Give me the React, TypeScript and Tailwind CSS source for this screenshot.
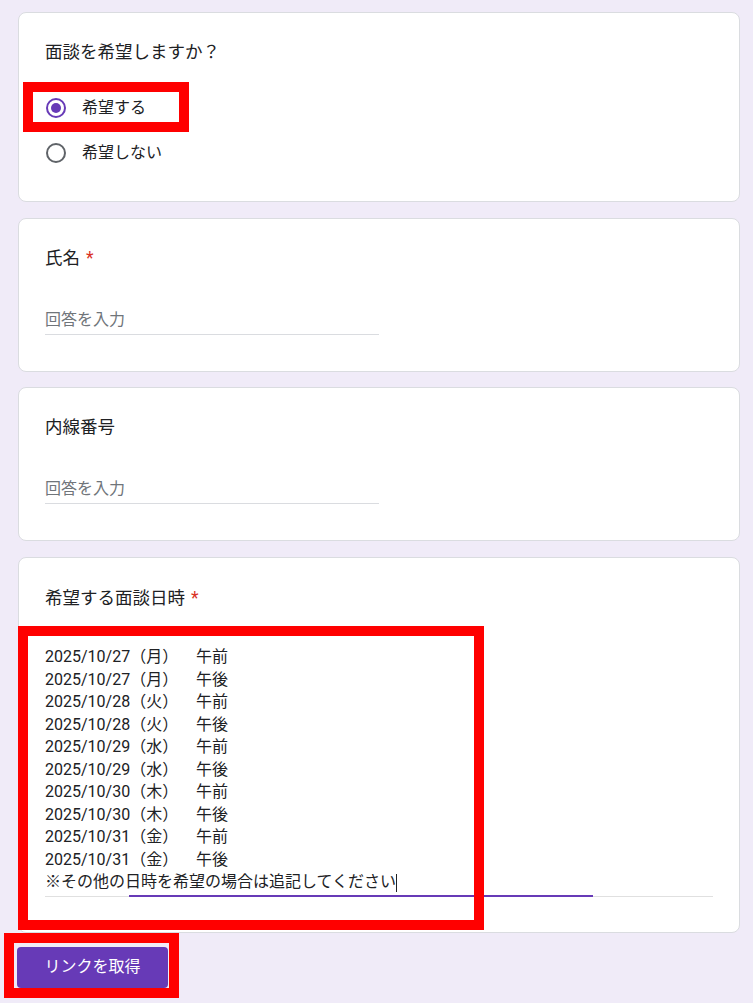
const SLOTS: [string, string][] = [
  ["2025/10/27（月）", "午前"],
  ["2025/10/27（月）", "午後"],
  ["2025/10/28（火）", "午前"],
  ["2025/10/28（火）", "午後"],
  ["2025/10/29（水）", "午前"],
  ["2025/10/29（水）", "午後"],
  ["2025/10/30（木）", "午前"],
  ["2025/10/30（木）", "午後"],
  ["2025/10/31（金）", "午前"],
  ["2025/10/31（金）", "午後"],
]

function Card({ className = "", children }: { className?: string; children: React.ReactNode }) {
  return (
    <section className={`relative w-[722px] bg-white border border-[#dadce0] rounded-lg px-[26px] ${className}`}>
      {children}
    </section>
  )
}

function Title({ text, required }: { text: string; required?: boolean }) {
  return (
    <h2 className="text-[17.5px] leading-[24px] text-[#202124]">
      {text}
      {required && <span className="ml-[6px] text-[#d93025]">*</span>}
    </h2>
  )
}

function Radio({ label, checked }: { label: string; checked?: boolean }) {
  return (
    <label className="flex items-center gap-[16px] h-[45px] pl-[1px]">
      <span
        className={`w-[20px] h-[20px] rounded-full border-2 flex items-center justify-center ${
          checked ? "border-[#673ab7]" : "border-[#5f6368]"
        }`}
      >
        {checked && <span className="w-[10px] h-[10px] rounded-full bg-[#673ab7]" />}
      </span>
      <span className="text-[16px] text-[#202124]">{label}</span>
    </label>
  )
}

function ShortInput() {
  return (
    <div className="mt-[38px] w-[334px] border-b border-[#dadce0] pb-[2px] text-[16px] leading-[24px] text-[#70757a]">
      回答を入力
    </div>
  )
}

export default function App() {
  return (
    <main className="min-h-screen bg-[#f0ebf8] pt-[12px] pl-[18px] pb-[20px] font-['Roboto','Noto_Sans_CJK_JP',sans-serif]">
      <div className="flex flex-col">
        {/* ── 面談希望 ─────────────────────────────── */}
        <Card className="pt-[27px] pb-[26px]">
          <Title text="面談を希望しますか？" />
          <div className="mt-[21px] flex flex-col">
            <Radio label="希望する" checked />
            <Radio label="希望しない" />
          </div>
          <div className="absolute left-[4px] top-[69px] w-[166px] h-[50px] border-[10px] border-[#ff0000]" />
        </Card>

        {/* ── 氏名 ─────────────────────────────────── */}
        <Card className="mt-[16px] pt-[27px] pb-[36px]">
          <Title text="氏名" required />
          <ShortInput />
        </Card>

        {/* ── 内線番号 ─────────────────────────────── */}
        <Card className="mt-[15px] pt-[27px] pb-[36px]">
          <Title text="内線番号" />
          <ShortInput />
        </Card>

        {/* ── 面談日時 ─────────────────────────────── */}
        <Card className="mt-[16px] pt-[28px] pb-[35px]">
          <Title text="希望する面談日時" required />
          <div className="relative mt-[36px] w-[668px] border-b border-[#e0e0e0] pb-[2px] text-[16px] leading-[22.5px] text-[#202124]">
            {SLOTS.map(([date, ampm]) => (
              <div key={date + ampm} className="flex">
                <span className="w-[151px]">{date}</span>
                <span>{ampm}</span>
              </div>
            ))}
            <div className="whitespace-pre">
              ※その他の日時を希望の場合は追記してください
              <span className="inline-block w-px h-[18px] bg-[#202124] align-middle" />
            </div>
            <div className="absolute left-[84px] bottom-[-1px] w-[464px] h-[2px] bg-[#673ab7]" />
          </div>
          <div className="absolute left-[-1px] top-[68px] w-[466px] h-[304px] border-[10px] border-[#ff0000]" />
        </Card>

        {/* ── Button ───────────────────────────────── */}
        <div className="relative mt-[14px] ml-[-1px] self-start">
          <button className="w-[151px] h-[41px] rounded bg-[#673ab7] text-white text-[16px]">
            リンクを取得
          </button>
          <div className="absolute left-[-13px] top-[-14px] w-[175px] h-[65px] border-[10px] border-[#ff0000]" />
        </div>
      </div>
    </main>
  )
}
